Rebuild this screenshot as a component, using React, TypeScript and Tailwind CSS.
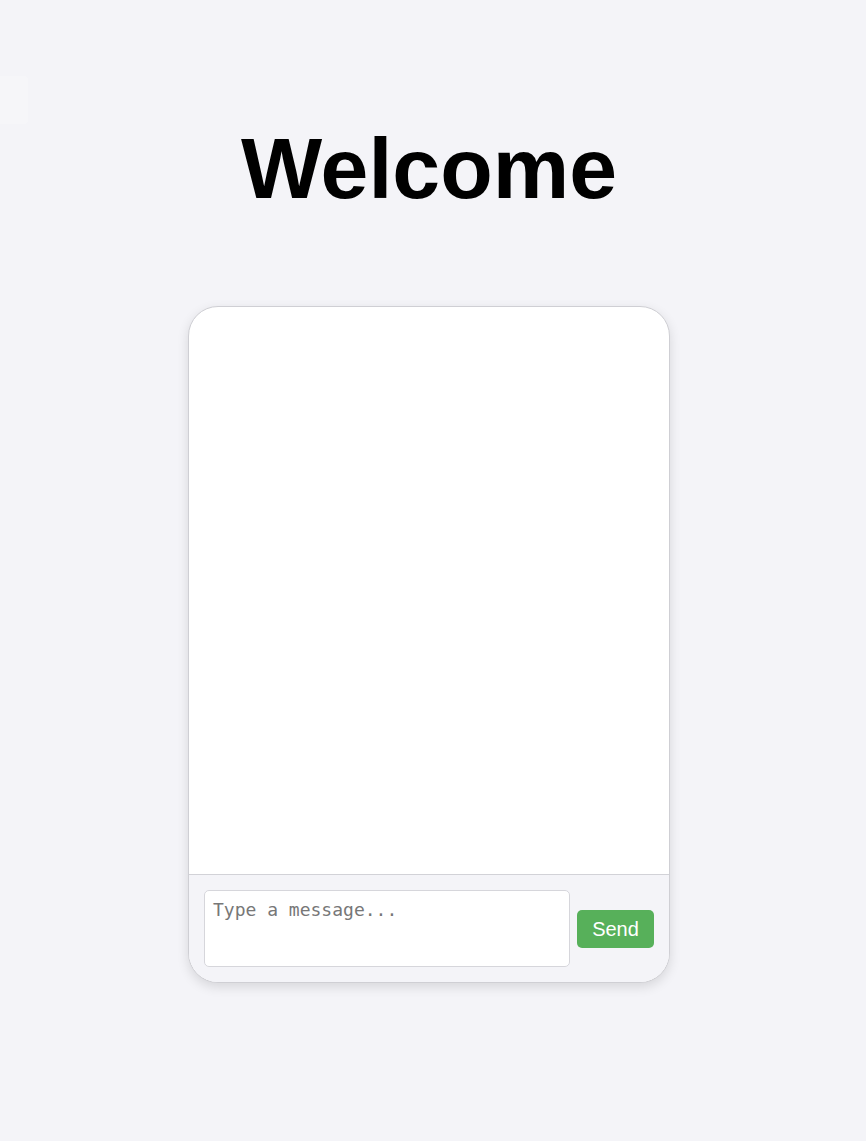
export default function App() {
  return (
    <div className="relative min-h-screen bg-[#f4f4f8] flex flex-col items-center pt-[120px] pr-[8px]">
      {/* faint floating button in the corner */}
      <div className="absolute left-0 top-[76px] w-[28px] h-[48px] bg-[#f6f6f9] rounded-r-[4px]" />

      <h1 className="font-['Liberation_Sans',Arial,sans-serif] font-bold text-[86px] leading-[96px] text-black">
        Welcome
      </h1>

      <div className="mt-[90px] w-[482px] h-[677px] rounded-[30px] border border-[#cfcfd4] bg-white shadow-[0_4px_12px_rgba(0,0,0,0.12)] overflow-hidden flex flex-col">
        <div className="flex-1" />
        <div className="border-t border-[#d2d2d7] bg-[#f4f4f8] px-[15px] pt-[15px] pb-[15px] flex items-center gap-[7px]">
          <textarea
            placeholder="Type a message..."
            className="w-[366px] h-[77px] resize-none rounded-[5px] border border-[#d6d6db] bg-white p-[8px] font-['DejaVu_Sans_Mono',monospace] text-[18px] leading-[21px] text-black placeholder:text-[#777] outline-none"
          />
          <button className="w-[77px] h-[38px] rounded-[5px] bg-[#57b05a] text-white font-['Liberation_Sans',Arial,sans-serif] text-[20px]">
            Send
          </button>
        </div>
      </div>
    </div>
  );
}
